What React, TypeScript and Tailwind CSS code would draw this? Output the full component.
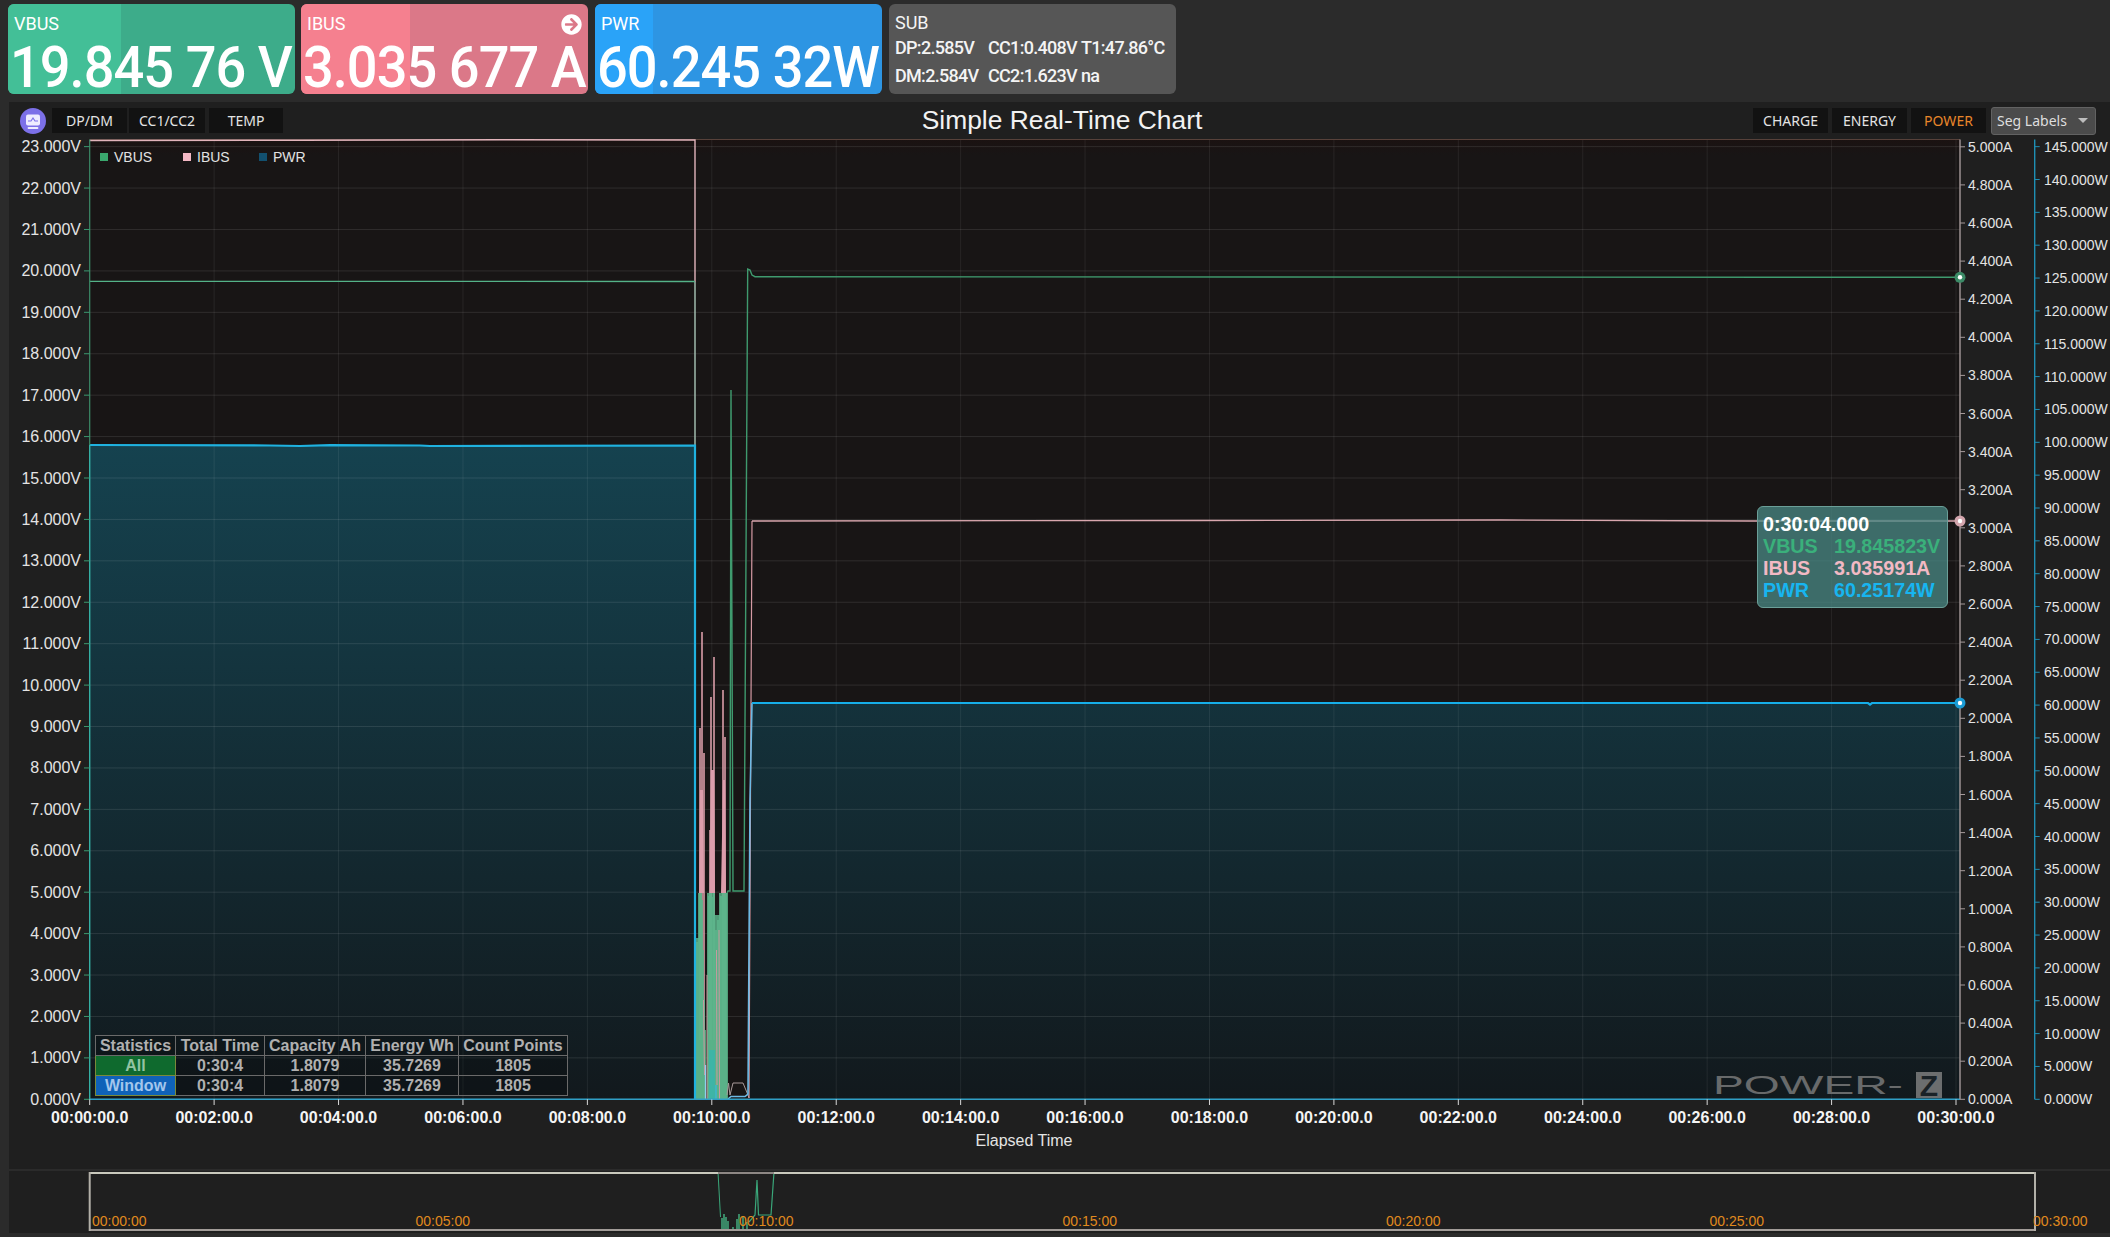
import { FaArrowCircleRight } from "react-icons/fa";

const arial = "font-['Liberation_Sans',Arial,sans-serif]";
const din = "font-['Roboto',sans-serif]";
const yahei = "font-['Noto_Sans',sans-serif]";

const TOP = 139.5;
const BOTTOM = 1099.3;
const LEFT = 89.7;
const RIGHT = 1960;
const W_AXIS = 2034.7;
const STEP_Y = 41.42;
const STEP_A = 38.1;
const STEP_W = 32.85;
const STEP_X = 124.42;

const voltTicks = Array.from({ length: 24 }, (_, i) => i);
const ampTicks = Array.from({ length: 26 }, (_, i) => i);
const wattTicks = Array.from({ length: 30 }, (_, i) => i);
const timeTicks = Array.from({ length: 16 }, (_, i) => i);

const pad = (n: number) => String(n).padStart(2, "0");

// burst after the cable was replugged, [x, top of spike]
const pinkSpikes = [
  [700, 728], [702, 632], [704, 753], [710, 830], [711, 697], [714, 657], [723, 690], [725, 737],
];
const greenSpikes = [
  [696, 938], [697, 942], [698, 938], [699, 893], [700, 895], [701, 893], [702, 900], [703, 950], [704, 1000],
  [705, 1030], [708, 893], [709, 896], [710, 893], [711, 893], [712, 897], [713, 893], [714, 893],
  [715, 915], [716, 930], [717, 915], [718, 920], [719, 915], [720, 893], [721, 896], [722, 893],
  [723, 893], [724, 897], [725, 893], [726, 893], [727, 893],
];
const miniBurst = [
  [721, 1230], [722, 1218], [723, 1230], [724, 1214], [725, 1230], [726, 1217], [727, 1230], [728, 1221], [730, 1230],
  [733, 1227], [735, 1230], [737, 1219], [738, 1230], [739, 1214], [741, 1230], [743, 1216], [745, 1230], [747, 1222], [749, 1230],
];

function MetricCard({ label, value, width, stripe, base, arrow, extra }: { label: string; value: string; width: string; stripe: string; base: string; arrow?: boolean; extra?: string }) {
  return (
    <div className={`relative w-[287px] h-[90px] rounded-md text-white ${din} ${base} ${extra ?? ""}`}>
      <div className={`absolute left-0 top-0 bottom-0 rounded-l-md ${width} ${stripe}`}></div>
      <div className="relative flex items-center justify-between pl-[6px] pr-[6px] pt-[9px] h-[31px] text-[18px] leading-none">
        <span>{label}</span>
        {arrow && <FaArrowCircleRight className="text-[21px]" />}
      </div>
      <div className="relative pl-[2px] mt-[5px] text-[57px] leading-[56px] font-medium tracking-[-1px] whitespace-nowrap origin-left scale-x-[0.95]">{value}</div>
    </div>
  );
}

function SubCard() {
  return (
    <div className={`ml-px w-[287px] h-[90px] rounded-md bg-[#565656] text-[#f4f4f4] pl-[6px] pt-[10px] ${din}`}>
      <div className="text-[18px] leading-[18px]">SUB</div>
      <div className="grid grid-cols-[93px_93px_auto] mt-[2px] text-[18px] leading-[28px] font-medium tracking-[-0.7px] whitespace-nowrap">
        <span>DP:2.585V</span>
        <span>CC1:0.408V</span>
        <span>T1:47.86°C</span>
        <span>DM:2.584V</span>
        <span>CC2:1.623V</span>
        <span>na</span>
      </div>
    </div>
  );
}

function ToolButton({ children, active, width }: { children: string; active?: boolean; width: string }) {
  return (
    <div className={`h-[25px] ${width} bg-[#121212] flex items-center justify-center text-[14px] ${active ? "text-[#e8862a]" : "text-[#e4e4e4]"}`}>
      {children}
    </div>
  );
}

function AppIcon() {
  return (
    <svg width="26" height="26" viewBox="0 0 26 26">
      <circle cx="13" cy="13" r="13" fill="#7c70e8" />
      <rect x="6" y="6.5" width="14" height="11" rx="2" fill="#eeecff" />
      <path d="M8 13h3l2-3 2 3h3" fill="none" stroke="#7c70e8" strokeWidth="1.2" />
      <path d="M8.5 20h9" stroke="#eeecff" strokeWidth="1.8" strokeLinecap="round" />
    </svg>
  );
}

function Toolbar() {
  return (
    <div className="grid grid-cols-[1fr_auto_1fr] items-center h-[37px]">
      <div className="flex items-center pl-[11px]">
        <AppIcon />
        <div className="flex ml-[6px]">
          <ToolButton width="w-[75px]">DP/DM</ToolButton>
          <div className="w-[2px]"></div>
          <ToolButton width="w-[76px]">CC1/CC2</ToolButton>
          <div className="w-[4px]"></div>
          <ToolButton width="w-[74px]">TEMP</ToolButton>
        </div>
      </div>
      <div className={`pl-[5px] text-[26.4px] leading-none text-[#f2f2f2] ${arial}`}>Simple Real-Time Chart</div>
      <div className="flex items-center justify-end gap-[4px] pr-[14px]">
        <ToolButton width="w-[75px]">CHARGE</ToolButton>
        <ToolButton width="w-[75px]">ENERGY</ToolButton>
        <ToolButton width="w-[75px]" active>POWER</ToolButton>
        <div className="ml-[1px] flex items-center justify-between w-[105px] h-[28px] pl-[5px] pr-[7px] rounded-[3px] bg-[#4b4b4b] border border-[#626262] text-[14px] text-[#dedede]">
          <span>Seg Labels</span>
          <span className="w-0 h-0 border-x-[5px] border-x-transparent border-t-[5px] border-t-[#bdbdbd]"></span>
        </div>
      </div>
    </div>
  );
}

function ChartSvg() {
  return (
    <svg width="2101" height="1030" viewBox="9 139 2101 1030" className={`block ${arial}`}>
      <defs>
        <linearGradient id="pwrFill" gradientUnits="userSpaceOnUse" x1="0" y1="445" x2="0" y2="1099">
          <stop offset="0" stopColor="#15424f" />
          <stop offset="1" stopColor="#12191d" />
        </linearGradient>
        <linearGradient id="plotBg" gradientUnits="userSpaceOnUse" x1="0" y1="139" x2="0" y2="300">
          <stop offset="0" stopColor="#1b1211" />
          <stop offset="0.1" stopColor="#181515" />
          <stop offset="1" stopColor="#181515" />
        </linearGradient>
      </defs>

      <rect x={LEFT} y={TOP} width={RIGHT - LEFT} height={BOTTOM - TOP} fill="url(#plotBg)" />

      <path d="M89.7 445 L270 445.5 L300 446 L330 445.2 L420 445.5 L430 446 L695 445.5 L695 1099 L89.7 1099 Z" fill="url(#pwrFill)" />
      <path d="M750 1099 L752 703 L1960 703 L1960 1099 Z" fill="url(#pwrFill)" />

      {voltTicks.map((i) => (
        <line key={i} x1={LEFT} x2={RIGHT} y1={BOTTOM - i * STEP_Y} y2={BOTTOM - i * STEP_Y} stroke="#ffffff" strokeOpacity="0.1" />
      ))}
      {timeTicks.map((i) => (
        <line key={i} x1={LEFT + i * STEP_X} x2={LEFT + i * STEP_X} y1={TOP} y2={BOTTOM} stroke="#ffffff" strokeOpacity="0.07" />
      ))}

      <line x1={LEFT} x2={RIGHT} y1={TOP} y2={TOP} stroke="#57413a" />

      {pinkSpikes.map(([x, top]) => (
        <line key={x} x1={x} x2={x} y1={top} y2="1040" stroke="#e6a6b2" strokeWidth="1.5" />
      ))}
      <path d="M699 893 L700 790 L703 790 L704 893 Z M709.5 893 L711 770 L714 770 L715 893 Z M721 893 L723 780 L725 780 L726 893 Z" fill="#dc9dab" />
      {greenSpikes.map(([x, top]) => (
        <line key={x} x1={x} x2={x} y1={top} y2={BOTTOM} stroke="#5cb58b" strokeWidth="1.7" />
      ))}
      <path d="M703.5 1000 L704.5 1075 M707 975 L707 1099 M716.5 950 L717 1085 M719 930 L719.5 1099" stroke="#c99aa0" strokeWidth="1" fill="none" />
      <rect x="709" y="1050" width="6" height="49" fill="#35b5b0" fillOpacity="0.75" />
      <line x1="705.5" x2="705.5" y1="1065" y2="1099" stroke="#8fd0ee" strokeWidth="1.3" />
      <line x1="716" x2="716" y1="1085" y2="1099" stroke="#37b8e0" strokeWidth="1.3" />

      <polyline points="727,1095 728.5,1083 730,1095 733,1083 743,1083 748,1095 749,1098" fill="none" stroke="#a89a9a" strokeWidth="1" />
      <polyline points="749,1098 751,703 752,521" fill="none" stroke="#d59aa4" strokeWidth="1.2" />
      <polyline points="89.7,140.5 300,140.2 500,139.8 695,140 695,282" fill="none" stroke="#e2b4bb" strokeWidth="1.4" />
      <line x1="695" x2="695" y1="282" y2="900" stroke="#a9c6b8" strokeWidth="1.4" />
      <polyline points="752,521 1200,520.5 1500,520 1750,521 1960,521" fill="none" stroke="#d9a7ae" strokeWidth="1.3" />

      <polyline points="89.7,281.3 695,281.5" fill="none" stroke="#54b288" strokeWidth="1.3" />
      <polyline points="727,893 728,891 730,891 731,390 733,891 744,891 747.7,269 750,270 752,275 755,276.7 1960,277.3" fill="none" stroke="#3f9a6e" strokeWidth="1.4" />

      <polyline points="89.7,445 270,445.5 300,446 330,445.2 420,445.5 430,446 695,445.5 695,1099" fill="none" stroke="#1fb2e0" strokeWidth="2.2" />
      <polyline points="728,1099 731,1096.5 745,1096.5 748,1094 750,800 752,703" fill="none" stroke="#6db9e4" strokeWidth="1.6" />
      <polyline points="752,703 1868,703 1870,704.5 1872,703 1960,703" fill="none" stroke="#16aee8" strokeWidth="2.2" />

      <line x1={LEFT} x2={LEFT} y1={TOP} y2="445" stroke="#3a8a66" strokeWidth="1.2" />
      <line x1={LEFT} x2={LEFT} y1="445" y2={BOTTOM} stroke="#35b0a4" strokeWidth="1.4" />
      <line x1={LEFT} x2={RIGHT} y1={BOTTOM} y2={BOTTOM} stroke="#2f9fc6" strokeWidth="1.6" />
      <line x1={RIGHT} x2={RIGHT} y1={TOP} y2={BOTTOM} stroke="#a59a9b" strokeWidth="1.4" />
      <line x1={W_AXIS} x2={W_AXIS} y1={TOP} y2={BOTTOM} stroke="#1e8fb4" strokeWidth="1.4" />

      <text x="1713" y="1094" fontSize="26.5" textLength="190" lengthAdjust="spacingAndGlyphs" fill="#686a6b">POWER-</text>
      <rect x="1916" y="1072" width="26" height="26" fill="#6c6e6f" />
      <text x="1929" y="1095.5" fontSize="30" fontWeight="700" textAnchor="middle" fill="#1a2227">Z</text>

      {voltTicks.map((i) => (
        <g key={i}>
          <line x1="84" x2={LEFT} y1={BOTTOM - i * STEP_Y} y2={BOTTOM - i * STEP_Y} stroke="#3a9a70" />
          <text x="81" y={BOTTOM - i * STEP_Y} fontSize="16" textAnchor="end" dominantBaseline="central" fill="#e4e4e4">{i}.000V</text>
        </g>
      ))}
      {ampTicks.map((i) => (
        <g key={i}>
          <line x1={RIGHT} x2={RIGHT + 5} y1={BOTTOM - i * STEP_A} y2={BOTTOM - i * STEP_A} stroke="#a59a9b" />
          <text x="1968" y={BOTTOM - i * STEP_A} fontSize="14" dominantBaseline="central" fill="#e4e4e4">{(i * 0.2).toFixed(3)}A</text>
        </g>
      ))}
      {wattTicks.map((i) => (
        <g key={i}>
          <line x1={W_AXIS} x2={W_AXIS + 5} y1={BOTTOM - i * STEP_W} y2={BOTTOM - i * STEP_W} stroke="#1e8fb4" />
          <text x="2044" y={BOTTOM - i * STEP_W} fontSize="14" dominantBaseline="central" fill="#e4e4e4">{i * 5}.000W</text>
        </g>
      ))}
      {timeTicks.map((i) => (
        <g key={i}>
          <line x1={LEFT + i * STEP_X} x2={LEFT + i * STEP_X} y1={BOTTOM} y2="1105" stroke="#d8d8d8" />
          <text x={LEFT + i * STEP_X} y="1117" fontSize="16" fontWeight="700" textAnchor="middle" dominantBaseline="central" fill="#f4f4f4">
            00:{pad(i * 2)}:00.0
          </text>
        </g>
      ))}
      <text x="1024" y="1140" fontSize="16" textAnchor="middle" dominantBaseline="central" fill="#e4e4e4">Elapsed Time</text>

      <circle cx={RIGHT} cy="277.3" r="5.5" fill="#3b8a66" />
      <circle cx={RIGHT} cy="277.3" r="2.2" fill="#ffffff" />
      <circle cx={RIGHT} cy="521" r="5.5" fill="#d3a5ad" />
      <circle cx={RIGHT} cy="521" r="2.2" fill="#ffffff" />
      <circle cx={RIGHT} cy="703" r="5.5" fill="#1a9bd4" />
      <circle cx={RIGHT} cy="703" r="2.2" fill="#ffffff" />
    </svg>
  );
}

function Legend() {
  const items = [
    { name: "VBUS", color: "bg-[#3aa76d]", width: "w-[83px]" },
    { name: "IBUS", color: "bg-[#f4b8c4]", width: "w-[76px]" },
    { name: "PWR", color: "bg-[#12506f]", width: "w-[60px]" },
  ];
  return (
    <div className={`absolute left-[91px] top-[11px] flex text-[14px] leading-[14px] text-[#e2e2e2] ${arial}`}>
      {items.map((item) => (
        <div key={item.name} className={`flex items-center gap-[6px] ${item.width}`}>
          <span className={`w-[8px] h-[8px] ${item.color}`}></span>
          <span>{item.name}</span>
        </div>
      ))}
    </div>
  );
}

function Tooltip() {
  const rows = [
    { name: "VBUS", value: "19.845823V", color: "text-[#3ab07b]" },
    { name: "IBUS", value: "3.035991A", color: "text-[#f2b9c4]" },
    { name: "PWR", value: "60.25174W", color: "text-[#17b5f0]" },
  ];
  return (
    <div className={`absolute left-[1748px] top-[367px] w-[191px] h-[102px] pl-[5px] pt-[6px] rounded-md border border-[#6b9f98] bg-[#4a8a86]/75 text-[19.7px] leading-[22px] font-bold ${arial}`}>
      <div className="text-white">0:30:04.000</div>
      {rows.map((row) => (
        <div key={row.name} className={`flex ${row.color}`}>
          <span className="w-[71px]">{row.name}</span>
          <span>{row.value}</span>
        </div>
      ))}
    </div>
  );
}

function StatsTable() {
  const cell = "border border-[#6a6a6a] p-0 text-center";
  const rows = [
    { name: "All", color: "bg-[#0f6a2e] text-[#93c3a2] border-[#7a8a3a]" },
    { name: "Window", color: "bg-[#0f62b8] text-[#a3c6ec] border-[#7a8a3a]" },
  ];
  return (
    <table className={`absolute left-[86px] top-[896px] w-[472px] h-[60px] table-fixed border-collapse text-[16px] leading-[19px] font-bold text-[#b0b0b0] bg-black/20 ${arial}`}>
      <colgroup>
        <col className="w-[80px]" />
        <col className="w-[89px]" />
        <col className="w-[101px]" />
        <col className="w-[93px]" />
        <col className="w-[109px]" />
      </colgroup>
      <tbody>
        <tr>
          <td className={cell}>Statistics</td>
          <td className={cell}>Total Time</td>
          <td className={cell}>Capacity Ah</td>
          <td className={cell}>Energy Wh</td>
          <td className={cell}>Count Points</td>
        </tr>
        {rows.map((row) => (
          <tr key={row.name}>
            <td className={`${cell} ${row.color}`}>{row.name}</td>
            <td className={cell}>0:30:4</td>
            <td className={cell}>1.8079</td>
            <td className={cell}>35.7269</td>
            <td className={cell}>1805</td>
          </tr>
        ))}
      </tbody>
    </table>
  );
}

function Overview() {
  const labels = ["00:00:00", "00:05:00", "00:10:00", "00:15:00", "00:20:00", "00:25:00", "00:30:00"];
  return (
    <svg width="2101" height="62" viewBox="9 1171 2101 62" className={`block ${arial}`}>
      <polyline points="718,1172 720.5,1217" fill="none" stroke="#3aa77a" />
      {miniBurst.map(([x, top]) => (
        <line key={x} x1={x} x2={x} y1={top} y2="1230" stroke="#46b585" strokeWidth="1.4" />
      ))}
      <polyline points="749,1222 755,1215 757,1180 758.5,1215 771,1215 774,1172" fill="none" stroke="#3aa77a" strokeWidth="1.2" />
      <path d="M89.7 1173 H2035" stroke="#c9c9bd" strokeWidth="2" />
      <path d="M718 1173 H774" stroke="#8d8784" strokeWidth="2" />
      <path d="M89.7 1230 H2035" stroke="#a29c98" strokeWidth="2" />
      <path d="M89.7 1172 V1231 M2035 1172 V1231" stroke="#b2b0a8" strokeWidth="2" />
      {labels.map((label, i) => (
        <text key={label} x={92 + i * 323.5} y="1221" fontSize="14" dominantBaseline="central" fill="#e08a1e">{label}</text>
      ))}
    </svg>
  );
}

export default function App() {
  return (
    <div className={`w-full h-[1237px] overflow-hidden bg-[#2b2b2b] ${yahei}`}>
      <div className="h-[102px] flex gap-[6px] pl-[8px] pt-[4px]">
        <MetricCard label="VBUS" value="19.845 76 V" width="w-[113px]" base="bg-[#3dac8a]" stripe="bg-[#43bf97]" />
        <MetricCard label="IBUS" value="3.035 677 A" width="w-[109px]" base="bg-[#db7888]" stripe="bg-[#f5808f]" arrow />
        <MetricCard label="PWR" value="60.245 32W" width="w-[58px]" base="bg-[#2d95e3]" stripe="bg-[#2aa3f8]" extra="ml-px" />
        <SubCard />
      </div>
      <div className="ml-[9px] h-[1067px] bg-[#1f1f1f]">
        <Toolbar />
        <div className="relative">
          <ChartSvg />
          <Legend />
          <Tooltip />
          <StatsTable />
        </div>
      </div>
      <div className="ml-[9px] mt-[2px] h-[62px] bg-[#1f1f1f]">
        <Overview />
      </div>
    </div>
  );
}
